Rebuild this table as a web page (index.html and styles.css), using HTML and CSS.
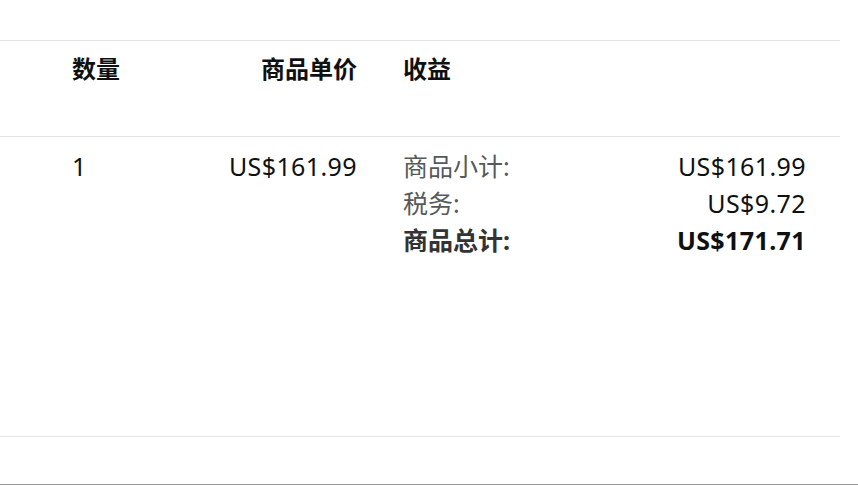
FILE: index.html
```html
<!DOCTYPE html>
<html lang="zh">
  <head>
    <meta charset="UTF-8" />
    <meta name="viewport" content="width=device-width, initial-scale=1.0" />
    <title>订单详情</title>
    <link rel="stylesheet" href="styles.css">
  </head>
  <body>
    <div class="order-table">
      <div class="row head-row">
        <div class="col-qty">数量</div>
        <div class="col-price">商品单价</div>
        <div class="col-earn">收益</div>
      </div>

      <div class="row item-row">
        <div class="col-qty">1</div>
        <div class="col-price num">US$161.99</div>
        <div class="col-earn">
          <div class="line">
            <span class="label">商品小计:</span>
            <span class="num">US$161.99</span>
          </div>
          <div class="line">
            <span class="label">税务:</span>
            <span class="num">US$9.72</span>
          </div>
          <div class="line total">
            <span class="label">商品总计:</span>
            <span class="num">US$171.71</span>
          </div>
        </div>
      </div>
    </div>

    <div class="bottom-bar"></div>
  </body>
</html>
```

FILE: styles.css
```css
body {
  font-family: "Noto Sans", "Noto Sans CJK SC", sans-serif;
  background-color: #fff;
  color: #0f1111;
  margin: 0;
  padding: 0;
}
.order-table {
  width: 840px;
  margin-top: 40px;
  border-top: 1px solid #e3e3e3;
}
.row {
  display: grid;
  grid-template-columns: 140px 145px 1fr;
  padding: 0 34px 0 72px;
  border-bottom: 1px solid #e3e3e3;
}
.col-price {
  text-align: right;
}
.col-earn {
  padding-left: 46px;
}
.head-row {
  height: 96px;
  padding-top: 12px;
  box-sizing: border-box;
  font-size: 24px;
  font-weight: bold;
  line-height: 32px;
}
.item-row {
  height: 300px;
  padding-top: 11px;
  box-sizing: border-box;
  font-size: 25px;
  line-height: 37px;
}
.num {
  letter-spacing: 0.4px;
}
.line {
  display: flex;
  justify-content: space-between;
}
.label {
  color: #565959;
}
.total .label {
  color: #333;
  font-weight: bold;
}
.total .num {
  font-weight: bold;
}
.bottom-bar {
  margin-top: 47px;
  border-bottom: 1px solid #999;
}
```
